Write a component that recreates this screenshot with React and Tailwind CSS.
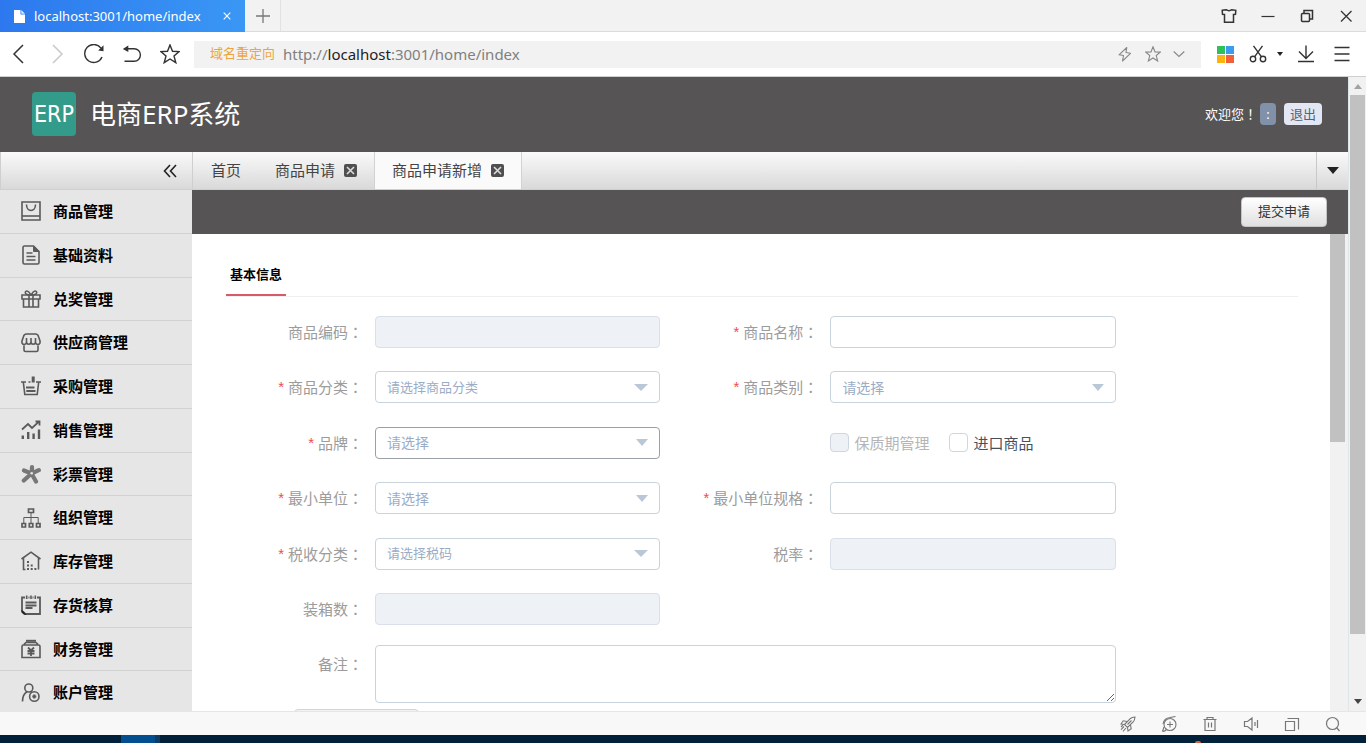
import React from 'react';

function Svg({ size = 'size-5', box = '0 0 20 20', w = 1.3, children }) {
  return (
    <svg viewBox={box} className={`${size} shrink-0`} fill="none" stroke="currentColor" strokeWidth={w} aria-hidden="true">
      {children}
    </svg>
  );
}

const STAR = 'M10 .9 12.5 7.3l6.6.3-5.1 4.3 1.8 6.8L10 15l-5.8 3.7L6 11.9.9 7.6l6.6-.3z';

function IconButton({ label, className = '', children }) {
  return (
    <button type="button" aria-label={label} className={`flex shrink-0 items-center justify-center ${className}`}>
      {children}
    </button>
  );
}

function TitleBar() {
  return (
    <div className="flex h-8 shrink-0 border-b border-[#dcdcdc] bg-[#f2f2f2]">
      <div className="flex h-8 w-[245px] items-center bg-linear-to-r from-[#2d78ee] to-[#3a97f5] pr-3 pl-3.5 text-white">
        <svg viewBox="0 0 11 13" className="h-[13px] w-[11px]" aria-hidden="true">
          <path fill="#fff" d="M0 0h6.5v4.5H11V13H0z" />
          <path fill="#dbe9fd" d="M7.3 0 11 3.7H7.3z" />
        </svg>
        <span className="ml-[9px] flex-1 text-[13px] leading-4">localhost:3001/home/index</span>
        <IconButton label="关闭标签" className="size-3">
          <Svg size="size-2" box="0 0 8 8" w={1.1}><path d="m.7.7 6.6 6.6M7.3.7.7 7.3" /></Svg>
        </IconButton>
      </div>
      <IconButton label="新建标签" className="w-9 border-r border-[#e2e2e2] text-[#777]">
        <Svg size="size-4" box="0 0 16 16" w={1.3}><path d="M8 1v14M1 8h14" /></Svg>
      </IconButton>
      <div className="flex flex-1 items-center justify-end gap-[23px] pr-3 text-[#333]">
        <IconButton label="皮肤">
          <Svg size="size-4" box="0 0 16 16" w={1.5}><path d="M1.200 2.300 5.200 1.700q2.800 2 5.600 0l4 .6-.3 4.100-2 .1v7.800h-9V6.500l-2-.1z" /></Svg>
        </IconButton>
        <IconButton label="最小化"><Svg size="size-4" box="0 0 16 16" w={1.2}><path d="M1.500 8.500h13" /></Svg></IconButton>
        <IconButton label="还原">
          <Svg size="size-4" box="0 0 16 16" w={1.5}><rect x="2.500" y="5.500" width="8" height="8" rx="1" /><path d="M5 5.500v-3h8.500V11h-3" /></Svg>
        </IconButton>
        <IconButton label="关闭窗口"><Svg size="size-4" box="0 0 16 16"><path d="m3 3 10.500 10.500M13.500 3 3 13.500" /></Svg></IconButton>
      </div>
    </div>
  );
}

function AddressBar() {
  return (
    <div className="flex h-[45px] shrink-0 items-center border-b border-[#cfcfcf] bg-white pr-4 pl-2 text-[#333]">
      <div className="flex items-center gap-[18px]">
        <IconButton label="后退"><Svg w={1.5}><path d="M15 1 6 10l9 9" /></Svg></IconButton>
        <IconButton label="前进" className="text-[#c9c9c9]"><Svg w={1.5}><path d="m7 1 9 9-9 9" /></Svg></IconButton>
        <IconButton label="刷新">
          <Svg w={1.4}><path d="M18 13A9 9 0 1 1 17 4.200" /><path fill="currentColor" stroke="none" d="M19.500 1.300v6l-5.300-.8z" /></Svg>
        </IconButton>
        <IconButton label="撤销">
          <Svg w={1.4}><path d="M5 4.800h7.200a6.200 6.200 0 0 1 0 12.400H2.500" /><path fill="currentColor" stroke="none" d="m.8 5 5.500-3.500V8z" /></Svg>
        </IconButton>
        <IconButton label="收藏"><Svg w={1.4}><path d={STAR} /></Svg></IconButton>
      </div>
      <div className="ml-3.5 flex h-[27px] flex-1 items-center bg-[#f2f2f2] pr-4 pl-4 text-[#888]">
        <span className="text-[13px] text-[#eda43c]">域名重定向</span>
        <span className="ml-2 flex-1 text-[15px] whitespace-nowrap text-[#808080]">
          http://<span className="text-[#222]">localhost</span>:3001/home/index
        </span>
        <div className="flex items-center gap-3">
          <IconButton label="加速">
            <Svg size="size-4" box="0 0 16 16" w={1.1}><path d="M9.800 1.500 2 8.800l4.500.7L5.500 15 13.500 7.300 9 6.500z" strokeLinejoin="round" /></Svg>
          </IconButton>
          <IconButton label="添加收藏"><Svg size="size-4" w={1.4}><path d={STAR} /></Svg></IconButton>
          <IconButton label="展开"><Svg size="size-3" box="0 0 12 12" w={1.1}><path d="m.7 3.500 5.300 5 5.300-5" /></Svg></IconButton>
        </div>
      </div>
      <div className="ml-4 flex items-center">
        <IconButton label="应用">
          <svg viewBox="0 0 17 17" className="size-[17px]" aria-hidden="true">
            <path fill="#2fbf5b" d="M0 0h8v8H0z" /><path fill="#3a9bf0" d="M9 0h8v8H9z" />
            <path fill="#fbb30d" d="M0 9h8v8H0z" /><path fill="#f0603c" d="M9 9h8v8H9z" />
          </svg>
        </IconButton>
        <IconButton label="截图" className="ml-[15px]">
          <Svg size="size-[18px]" box="0 0 18 18" w={1.4}>
            <circle cx="4" cy="14" r="2.700" /><circle cx="14" cy="14" r="2.700" /><path d="M5.500 11.800 13.500.8M12.500 11.800 4.500.8" />
          </Svg>
        </IconButton>
        <IconButton label="截图选项" className="ml-2.5">
          <svg viewBox="0 0 6 4" className="h-1 w-1.5" aria-hidden="true"><path fill="#222" d="M0 0h6L3 4z" /></svg>
        </IconButton>
        <IconButton label="下载" className="ml-3.5">
          <Svg size="size-[18px]" box="0 0 18 18" w={1.4}><path d="M9 .5v13M2 6.500l7 7 7-7M1 16.500h16" /></Svg>
        </IconButton>
        <IconButton label="菜单" className="ml-[19px]">
          <Svg size="size-4" box="0 0 16 16" w={1.4}><path d="M.5 1.500h15M.5 8h15M.5 14.500h15" /></Svg>
        </IconButton>
      </div>
    </div>
  );
}

function AppHeader() {
  return (
    <header className="flex h-[75px] shrink-0 items-center bg-[#575455] pr-[26px] pb-px pl-8">
      <div className="flex size-11 items-center justify-center rounded-[4px] bg-[#339b89] font-['Liberation_Sans_Narrow','DejaVu_Sans_Condensed',sans-serif] text-[23px] leading-none text-white">
        ERP
      </div>
      <h1 className="ml-3.5 flex-1 text-[26px] leading-8 text-white">电商ERP系统</h1>
      <span className="text-[13px] text-white">欢迎您<span lang="zh-TW" className="font-['Noto_Sans_CJK_TC',sans-serif]">！</span></span>
      <button type="button" aria-label="当前用户" className="ml-[3px] h-[22px] w-4 rounded-[4px] bg-[#8191a9] text-[13px] leading-5 text-white">:</button>
      <button type="button" className="ml-2 h-[22px] rounded-[4px] bg-[#e2e7f3] px-1.5 text-[13px] leading-[22px] text-[#56617a]">退出</button>
    </header>
  );
}

function CloseBox({ name }) {
  return (
    <button type="button" aria-label={`关闭${name}`} className="ml-[9px] shrink-0">
      <svg viewBox="0 0 13 13" className="size-[13px]" aria-hidden="true">
        <rect width="13" height="13" rx="2" fill="#4f4f4f" />
        <path d="m3 3 7 7M10 3l-7 7" stroke="#dcdcdc" strokeWidth="1.600" />
      </svg>
    </button>
  );
}

function TabBar() {
  return (
    <nav className="flex h-[38px] shrink-0 border-b border-[#d0d0d0] bg-linear-to-b from-[#fafafa] to-[#d9d9d9] text-[15px] text-[#444]">
      <div className="flex w-[193px] shrink-0 items-center justify-end border-r border-l border-[#cfcfcf] pr-3.5 text-[#222]">
        <IconButton label="收起菜单"><Svg size="size-4" box="0 0 16 16" w={1.6}><path d="M8 2 2.500 8 8 14M14 2 8.500 8l5.500 6" /></Svg></IconButton>
      </div>
      <div className="flex items-center pr-[17px] pl-[18px]"><a href="#home">首页</a></div>
      <div className="flex items-center px-[17px]"><a href="#apply">商品申请</a><CloseBox name="商品申请" /></div>
      <div className="flex items-center border-x border-[#d2d2d2] bg-[#fafafa] px-[17px]">
        <a href="#apply-new">商品申请新增</a><CloseBox name="商品申请新增" />
      </div>
      <div className="flex-1" />
      <IconButton label="更多标签" className="w-8 border-l border-[#c8c8c8]">
        <svg viewBox="0 0 12 7" className="h-[7px] w-3" aria-hidden="true"><path fill="#222" d="M0 0h12L6 7z" /></svg>
      </IconButton>
    </nav>
  );
}

const MENU = [
  ['商品管理', <><path d="M1 1h18v18H1z" /><path d="M1 15h18" /><path d="M5.500 3.500c0 8 9 8 9 0" /></>],
  ['基础资料', <><path d="M12.500 1h-9A1.500 1.500 0 0 0 2 2.500v15A1.500 1.500 0 0 0 3.500 19h13a1.500 1.500 0 0 0 1.500-1.500V6.500zM5.500 8h6M5.500 11.500h9M5.500 15h9" /><path fill="currentColor" strokeWidth="1" d="M12.500 1v5.500H18z" /></>],
  ['兑奖管理', <><path d="M1 6h18v4H1zM2.500 10v8h15v-8M8 6v12M12 6v12" /><path d="M9.500 6C3 6 3.500 2 6 2s3.500 4 4 4 1.500-4 4-4 3 4-3.500 4" /></>],
  ['供应商管理', <path d="M5.500 1h9q2.500 0 3.200 3l1.300 4c.8 4.500-4.500 4.500-4.500 1V5M5.500 1Q3 1 2.300 4L1 8c-.8 4.500 4.500 4.500 4.500 1V5M5.500 9c0 3 4.500 3 4.500 0V5M10 9c0 3 4.500 3 4.500 0M3 12.500v4.500q0 1.500 1.500 1.500h11q1.500 0 1.500-1.500v-4.500" />],
  ['采购管理', <><path d="M0 6h5M7.500 6h2M15 6h5M2.300 6l1.500 12.500h12.400L17.700 6" /><path strokeWidth="1.800" d="M5 11.500h8.500M5.300 15h9.200" /><path strokeWidth="3" d="M12.200.5v6" /></>],
  ['销售管理', <><path strokeWidth="1.800" d="M1 9.500 7 4l4 4 7-6.300M14.500 1.500h4v4" /><path strokeWidth="2.400" d="M1.800 15.500V19M7.200 12v7M12.600 13.500V19M18 9.500V19" /></>],
  ['彩票管理', <><g stroke="#777" strokeWidth="4.200" strokeLinecap="round"><path d="M10.800 9.500 11 3M10.500 9.500 3 6.500M10.500 9.500l-7.700 7M10.500 9.500l4.500 8M10.500 9.500l7.300-3.300" /></g><circle cx="10.700" cy="9.300" r="1.300" fill="#e6e6e6" stroke="none" /></>],
  ['组织管理', <><path strokeWidth="1.700" d="M7.500 1h5v3.500h-5zM1 15.500h3.500V19H1zM8.300 15.500h3.500V19H8.300zM15.500 15.500H19V19h-3.500z" /><path strokeWidth="1" d="M10 4.800v10.700M2.800 15.500v-6h14.400v6" /></>],
  ['库存管理', <><path d="M.5 8 10 1.200 19.500 8M2.500 7v11.500h2M17.500 7v11.500" /><path strokeWidth="2" strokeDasharray="2 1.700" d="M6 18h10.500M6 14.500h6M6 11h2.500" /></>],
  ['存货核算', <><path strokeWidth="1.800" d="M4 2.500H1V16l3.500 3H19V2.500h-3M7.500 2.500h1M11.500 2.500h1" /><path d="M5.700.5V4M10 .5V4M14.300.5V4" /><path strokeWidth="1.800" d="M4.500 7.500h11M4.500 10.500h11M4.500 13h7" /><path fill="#222" stroke="none" d="M.5 14.500 5.500 19.700H3L.5 17.500z" /></>],
  ['财务管理', <><path d="M1 7.500Q1 6 2.500 6h15Q19 6 19 7.500v11H1zM3 5.300 5 3.500h10l2 1.800" /><path strokeWidth="2" d="M5 1.800h10" /><path strokeWidth="1.800" d="m7 8.500 3 3 3-3M6.500 12h7M6.500 14.500h7M10 11.500V17" /></>],
  ['账户管理', <><circle cx="7.800" cy="5" r="4" /><path d="M1.500 18.500C1.500 13 3 10.500 6 8.800M9.500 8.500l1.500 1" /><circle cx="13.300" cy="13.500" r="4.700" /><path strokeWidth="2.200" d="M11.300 13.500h4M13.300 11.500v4" /></>],
];

function Sidebar() {
  return (
    <aside className="w-48 shrink-0 overflow-hidden bg-[#e6e6e6]">
      <ul className="grid h-[525px] grid-rows-12">
        {MENU.map(([name, icon]) => (
          <li key={name} className="flex border-b border-[#d2d2d2]">
            <a href="#menu" className="flex flex-1 items-center gap-3 pl-[21px] text-[15px] font-bold text-black">
              <span className="text-[#5a5a5a]"><Svg w={1.6}>{icon}</Svg></span>
              {name}
            </a>
          </li>
        ))}
      </ul>
    </aside>
  );
}

const BOX = 'h-8 w-full rounded-[4px] border border-[#c9d3dc] bg-white px-[11px] text-[14px] text-[#333] disabled:border-[#d9e0ea] disabled:bg-[#eef1f6]';

function Colon() {
  return <span lang="zh-TW" className="font-['Noto_Sans_CJK_TC',sans-serif]">：</span>;
}

function Field({ id, label, required, children }) {
  return (
    <div className="flex items-center">
      <label htmlFor={id} className="flex w-[149px] shrink-0 justify-end pr-3 text-[15px] leading-6 text-[#9c9c9c]">
        {required && <span className="mr-1 font-['Liberation_Sans',sans-serif] text-[#f04a50]">*</span>}
        {label}
        <Colon />
      </label>
      <div className="min-w-0 flex-1">{children}</div>
    </div>
  );
}

function TextField({ id, label, required, disabled }) {
  return (
    <Field id={id} label={label} required={required}>
      <input id={id} type="text" disabled={disabled} className={`block ${BOX}`} />
    </Field>
  );
}

function SelectField({ id, label, prompt, active, compact }) {
  return (
    <Field id={id} label={label} required>
      <div className="grid items-center">
        <select
          id={id}
          className={`col-start-1 row-start-1 h-8 w-full appearance-none rounded-[4px] border bg-white px-[11px] text-[#9badc6] ${active ? 'border-[#9aa0a6]' : 'border-[#c9d3dc]'} ${compact ? 'text-[13px]' : 'text-[14px]'}`}
        >
          <option>{prompt}</option>
        </select>
        <svg viewBox="0 0 14 7" className={`pointer-events-none col-start-1 row-start-1 mr-3 h-[7px] justify-self-end ${compact ? 'w-3.5' : 'w-3'}`} preserveAspectRatio="none" aria-hidden="true">
          <path fill="#b9c7d6" d="M0 0h14L7 7z" />
        </svg>
      </div>
    </Field>
  );
}

const TICK = 'size-[19px] appearance-none rounded-[4px] border border-[#ced6df] bg-white disabled:bg-[#eef1f6]';

function ProductForm() {
  return (
    <form className="pr-[17%]">
      <div className="grid h-[333px] grid-cols-2 grid-rows-6 gap-x-[21px]">
        <TextField id="code" label="商品编码" disabled />
        <TextField id="name" label="商品名称" required />
        <SelectField id="category" label="商品分类" prompt="请选择商品分类" compact />
        <SelectField id="kind" label="商品类别" prompt="请选择" />
        <SelectField id="brand" label="品牌" prompt="请选择" active />
        <div className="flex items-center pl-[149px] text-[15px] whitespace-nowrap">
          <input id="shelf" type="checkbox" disabled className={TICK} />
          <label htmlFor="shelf" className="ml-[5px] text-[#b5b5b5]">保质期管理</label>
          <input id="imported" type="checkbox" className={`ml-5 ${TICK}`} />
          <label htmlFor="imported" className="ml-[5px] text-[#48505e]">进口商品</label>
        </div>
        <SelectField id="unit" label="最小单位" prompt="请选择" />
        <TextField id="spec" label="最小单位规格" required />
        <SelectField id="taxclass" label="税收分类" prompt="请选择税码" compact />
        <TextField id="taxrate" label="税率" disabled />
        <TextField id="packing" label="装箱数" disabled />
      </div>
      <div className="flex pt-2">
        <label htmlFor="remark" className="flex w-[149px] shrink-0 justify-end pt-[7px] pr-3 text-[15px] leading-6 text-[#9c9c9c]">
          备注<Colon />
        </label>
        <textarea id="remark" className="h-[58px] flex-1 rounded-[4px] border border-[#c9d3dc] bg-white p-2 text-[14px]" />
      </div>
      <div className="mt-1.5 ml-[68px] h-8 w-[125px] rounded-[4px] border border-[#d0d6dc] bg-[#f0f2f4]" />
    </form>
  );
}

function Workspace() {
  return (
    <main className="flex min-w-0 flex-1 flex-col">
      <div className="flex h-11 shrink-0 items-center justify-end bg-[#575455] pr-[21px]">
        <button type="button" className="h-[30px] rounded-[4px] border border-[#c4c4c4] bg-linear-to-b from-white to-[#e0e0e0] px-4 text-[13px] text-[#333]">提交申请</button>
      </div>
      <div className="flex min-h-0 flex-1 bg-white">
        <div className="min-w-0 flex-1 overflow-hidden pt-[18px] pr-8 pl-[34px]">
          <div className="mb-[7px] flex border-b border-[#efefef]">
            <h2 className="h-11 border-b-2 border-b-[#d8596c] px-1 text-[13px] leading-[44px] font-bold text-black">基本信息</h2>
          </div>
          <ProductForm />
        </div>
        <div className="w-[18px] shrink-0 bg-[#f1f1f1]">
          <div className="mr-[3px] h-[208px] bg-[#c1c1c1]" />
        </div>
      </div>
    </main>
  );
}

function PageScrollbar() {
  return (
    <div className="flex w-[18px] shrink-0 flex-col items-center border-l border-[#dfe6ea] bg-[#f1f1f1]">
      <div className="flex h-[18px] items-center">
        <svg viewBox="0 0 8 5" className="h-[5px] w-2" aria-hidden="true"><path fill="#a3a3a3" d="M0 5h8L4 0z" /></svg>
      </div>
      <div className="h-[85%] w-[15px] bg-[#c1c1c1]" />
      <div className="mt-auto flex h-5 items-center">
        <svg viewBox="0 0 8 5" className="h-[5px] w-2" aria-hidden="true"><path fill="#444" d="M0 0h8L4 5z" /></svg>
      </div>
    </div>
  );
}

function StatusBar() {
  return (
    <>
      <div className="flex h-6 shrink-0 items-center justify-end gap-[25px] border-t border-[#e6e6e6] bg-[#f8f8f8] pr-[25px] text-[#777]">
        <IconButton label="加速器">
          <Svg size="size-4" box="0 0 16 16" w={1.1}>
            <path d="M4.500 8.500 10 2.800Q12 1.200 15 1q-.2 3-1.800 5L7.500 11.500zM7 5.500 3.200 4.800 1 8l3.500.5M10.500 9l.7 3.800L8 15l-.5-3.500M4 10.500l-3 3.200M6 12l-3 3.300M3 9l-2 2M7.500 8.500l4-4" />
          </Svg>
        </IconButton>
        <IconButton label="浏览医生">
          <Svg size="size-4" box="0 0 16 16" w={1.1}><circle cx="9" cy="8.500" r="6" /><path d="M9 5.500v6M6 8.500h6M1.500 15.500q2 0 4-2M2 8Q3 2 9 1.500l5.500-1M1.500 15.500 3 11" /></Svg>
        </IconButton>
        <IconButton label="清理">
          <Svg size="size-4" box="0 0 16 16" w={1.2}><path d="M1.500 3.500h13M5 3.500v-2h6v2M3 3.500v11h10v-11M6.500 6.500v5M9.500 6.500v5" /></Svg>
        </IconButton>
        <IconButton label="声音">
          <Svg size="size-4" box="0 0 16 16" w={1.2}><path d="M1.500 5.500h3L9 2v12l-4.500-3.500h-3zM12 6v4M14.500 4v8" /></Svg>
        </IconButton>
        <IconButton label="窗口">
          <Svg size="size-4" box="0 0 16 16" w={1.2}><path d="M1.500 5.500h9v9h-9zM3.500 2.500h11v11" /></Svg>
        </IconButton>
        <IconButton label="缩放">
          <Svg size="size-4" box="0 0 16 16" w={1.2}><circle cx="7.500" cy="7.500" r="6" /><path d="m11.500 11.500 3 3.500" /></Svg>
        </IconButton>
      </div>
      <div className="flex h-2 shrink-0 bg-[#01203a] pl-[121px]">
        <div className="w-[34px] bg-[#024e8f]" />
        <div className="w-[5px] bg-[#0f3b63]" />
        <div className="mr-[165px] ml-auto h-0.5 w-1.5 self-end rounded-t-full bg-[#d8603a]" />
      </div>
    </>
  );
}

export default function App() {
  return (
    <div className="flex h-screen flex-col overflow-hidden bg-white font-['Noto_Sans','Noto_Sans_CJK_SC',sans-serif]" lang="zh-CN">
      <TitleBar />
      <AddressBar />
      <div className="flex min-h-0 flex-1">
        <div className="flex min-w-0 flex-1 flex-col">
          <AppHeader />
          <TabBar />
          <div className="flex min-h-0 flex-1">
            <Sidebar />
            <Workspace />
          </div>
        </div>
        <PageScrollbar />
      </div>
      <StatusBar />
    </div>
  );
}
